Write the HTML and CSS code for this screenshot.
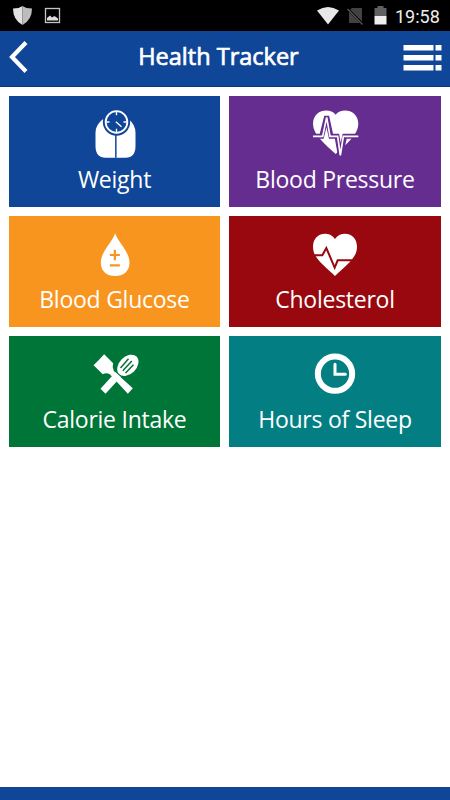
FILE: index.html
```
<!DOCTYPE html>
<html lang="en">
<head>
<meta charset="utf-8">
<title>Health Tracker</title>
<link rel="stylesheet" href="styles.css">
</head>
<body>
<div class="status">
  <svg class="status-left" viewBox="0 0 150 31"><path d="M13 8.500Q19 8.500 22.500 6V25Q13 20 13 8.500" fill="#e2e2e2"/><path d="M22.500 6Q26 8.500 32 8.500Q32 20 22.500 25Z" fill="#bdbdbd"/><rect x="45.500" y="8.500" width="14" height="14" fill="none" stroke="#c4c4c4" stroke-width="1.300"/><path d="M47 20.500V18L50 15.500L52 17.500L54.500 16L58 18.500V20.500Z" fill="#ddd"/></svg>
  <svg class="status-right" viewBox="310 0 80 31"><path d="M317 10.500Q328 3.500 339 10.500L328 24.500Z" fill="#e8e8e8"/><path d="M352 8H362V21.500L350 9.500ZM349 12L360 23H349Z" fill="#424242"/><path d="M347.500 9L362.500 24.500" stroke="#555" stroke-width="1.300"/><path d="M377.500 6H383.500V8H386.500V16H374.500V8H377.500Z" fill="#606060"/><rect x="374.500" y="16" width="12" height="8.500" fill="#eee"/></svg>
  <span class="time">19:58</span>
</div>
<header class="header">
  <svg class="back" viewBox="0 0 40 56"><path d="M26 11.500L12 26L26 40.500" fill="none" stroke="#fff" stroke-width="4.200"/></svg>
  <h1 class="title">Health Tracker</h1>
  <svg class="menu" viewBox="400 31 50 56"><path d="M403.500 45H433.500V50.500H403.500ZM435.500 45H441.500V50.500H435.500ZM403.500 55H433.500V60.500H403.500ZM435.500 55H441.500V60.500H435.500ZM403.500 65H433.500V70.500H403.500ZM435.500 65H441.500V70.500H435.500Z" fill="#fff"/></svg>
</header>
<main class="grid">
  <div class="tile weight">
    <svg class="icon" viewBox="28.500 12 180 156"><path d="M82 58H160Q180 75 180 98V138Q180 173 150 173H90Q60 173 60 138V98Q60 75 82 58Z" fill="#fff"/><path d="M121 100V173" stroke="#104697" stroke-width="4.500"/><circle cx="123" cy="66" r="41" fill="#104697"/><circle cx="123" cy="66" r="32.500" fill="none" stroke="#fff" stroke-width="5.500"/><path d="M123 36V46M123 86V97M92 66H102M144 66H154M121 65L138 80" fill="none" stroke="#fff" stroke-width="4"/></svg>
    <span class="label">Weight</span>
  </div>
  <div class="tile pressure">
    <svg class="icon" viewBox="30 12 180 156"><path d="M122 44C104 22 54 29 54 72C54 104 92 135 122 162C152 135 190 104 190 72C190 29 140 22 122 44Z" fill="#fff"/><path d="M50 109H80L95 49L108 109H126L136 166L149 109H194" fill="none" stroke="#662d91" stroke-width="15"/><path d="M54 109H83L95 52L105 109H128L136 166L145 109H190" fill="none" stroke="#fff" stroke-width="5"/></svg>
    <span class="label">Blood Pressure</span>
  </div>
  <div class="tile glucose">
    <svg class="icon" viewBox="28.500 -3 180 156"><path d="M119 25C110 52 76 80 76 113C76 139 95 153 119 153S162 139 162 113C162 80 128 52 119 25Z" fill="#fff"/><path d="M103 90H133M118 74V106M103 121H133" stroke="#f8951f" stroke-width="6.500"/></svg>
    <span class="label">Blood Glucose</span>
  </div>
  <div class="tile cholesterol">
    <svg class="icon" viewBox="30 -3 180 156"><path d="M120 42C103 15 54 22 54 65C54 101 88 121 120 153C152 121 186 101 186 65C186 22 137 15 120 42Z" fill="#fff"/><path d="M55 91H82L94 69L119 128L128 106H175" fill="none" stroke="#99080f" stroke-width="6"/></svg>
    <span class="label">Cholesterol</span>
  </div>
  <div class="tile calories">
    <svg class="icon" viewBox="28.500 -3 180 156"><path d="M86 28L113 55Q109 67 115 78L172 130L157 146L103 88Q92 82 82 88L54 61Q70 46 86 28Z" fill="#fff"/><path d="M75 131L120 82L136 96L90 146Z" fill="#fff"/><ellipse cx="157" cy="61" rx="26" ry="37" transform="rotate(45 157 61)" fill="#fff"/><path d="M135 69L159 41M142 77L169 48M150 84L174 59" stroke="#007538" stroke-width="4.500"/></svg>
    <span class="label">Calorie Intake</span>
  </div>
  <div class="tile sleep">
    <svg class="icon" viewBox="30 -3 180 156"><circle cx="120" cy="86" r="51.500" fill="none" stroke="#fff" stroke-width="18"/><path d="M120 58V88H151" fill="none" stroke="#fff" stroke-width="9" stroke-linecap="round"/></svg>
    <span class="label">Hours of Sleep</span>
  </div>
</main>
<footer class="footer"></footer>
</body>
</html>
```
FILE: styles.css
```
* { box-sizing: border-box; }
body {
  margin: 0;
  height: 800px;
  display: flex;
  flex-direction: column;
  background: #fff;
  color: #fff;
  font-family: "Open Sans", sans-serif;
  overflow: hidden;
}
.status {
  height: 31px;
  flex: none;
  display: flex;
  align-items: center;
  background: #000;
}
.status-left { width: 150px; height: 31px; }
.status-right { width: 80px; height: 31px; margin-left: auto; }
.time {
  width: 60px;
  padding-left: 5px;
  font: 18px/31px Roboto, sans-serif;
  padding-top: 1px;
  color: #eee;
}
.header {
  height: 56px;
  flex: none;
  display: flex;
  justify-content: space-between;
  background: #104697;
  border-bottom: 1px solid #08377f;
}
.back { width: 40px; height: 56px; }
.menu { width: 50px; height: 56px; }
.title {
  margin: 0;
  padding-right: 3px;
  font-size: 23.5px;
  font-weight: 400;
  -webkit-text-stroke: 0.7px #fff;
  line-height: 50px;
  white-space: nowrap;
}
.grid {
  flex: 1;
  display: grid;
  grid-template-columns: 211px 212px;
  grid-auto-rows: 111px;
  gap: 9px;
  padding: 9.4px 9px;
}
.tile {
  display: flex;
  flex-direction: column;
  align-items: center;
  padding-top: 7.6px;
}
.icon { width: 60px; height: 52px; flex: none; overflow: visible; }
.label {
  margin-top: 6px;
  font-size: 23px;
  letter-spacing: -0.25px;
  line-height: 34px;
  white-space: nowrap;
}
.weight { background: #104697; }
.pressure { background: #662d91; }
.glucose { background: #f8951f; }
.cholesterol { background: #99080f; }
.calories { background: #007538; }
.sleep { background: #037f84; }
.footer {
  height: 13px;
  flex: none;
  background: #104697;
  border-top: 1px solid #174284;
}
```
